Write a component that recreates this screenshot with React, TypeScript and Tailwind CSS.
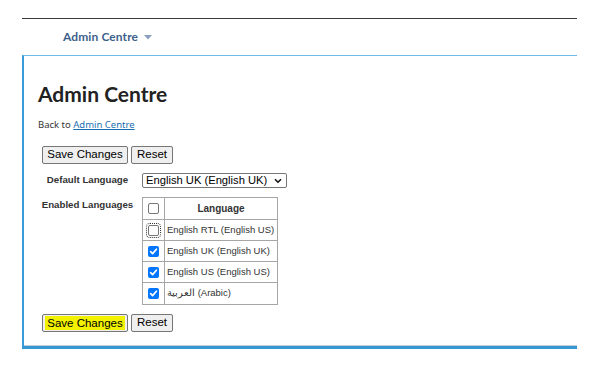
import React from "react";

function Box({ checked, focus }: { checked?: boolean; focus?: boolean }) {
  if (checked) {
    return (
      <span className="inline-flex w-[11px] h-[11px] rounded-[2px] bg-[#0075ff] items-center justify-center">
        <svg width="9" height="9" viewBox="0 0 9 9">
          <path d="M1.6 4.6 L3.6 6.6 L7.4 2.2" fill="none" stroke="white" strokeWidth="1.7" strokeLinecap="round" strokeLinejoin="round" />
        </svg>
      </span>
    );
  }
  return (
    <span className={"inline-block w-[11px] h-[11px] rounded-[2px] border border-[#767676] bg-white " + (focus ? "outline outline-1 outline-dotted outline-[#333] outline-offset-[1px]" : "")} />
  );
}

function Btn({ label, w, hl }: { label: string; w: string; hl?: boolean }) {
  return (
    <button
      className={
        "h-[18px] border border-[#767676] rounded-[2px] text-[11.5px] leading-none text-black font-['Liberation_Sans',sans-serif] flex items-center justify-center bg-[#efefef] " +
        w
      }
    >
      <span className={hl ? "bg-[#f2f200] px-[2px] leading-[14px]" : ""}>{label}</span>
    </button>
  );
}

const rows = [
  { name: "English RTL (English US)", checked: false, focus: true },
  { name: "English UK (English UK)", checked: true },
  { name: "English US (English US)", checked: true },
  { name: "العربية (Arabic)", checked: true },
];

export default function App() {
  return (
    <div className="w-[599px] h-[367px] bg-white overflow-hidden font-['Liberation_Sans',sans-serif]">
      <div className="pt-[18px] px-[22px]">
        <div className="h-[37px] border-t border-[#3a3a3a] flex items-center pl-[41px]">
          <span className="text-[12px] font-bold text-[#3d5f8c] font-['Lato',sans-serif] tracking-[0.1px]">Admin Centre</span>
          <svg className="ml-[6px] mt-[1px]" width="8" height="5" viewBox="0 0 8 5">
            <path d="M0 0 L8 0 L4 4.5 Z" fill="#8a9fbd" />
          </svg>
        </div>
        <div className="h-[294px] border-t border-t-[#6dbbe7] border-l-2 border-l-[#3b9bd8] border-b-[3px] border-b-[#3598d5]">
          <div className="h-full border-b border-b-[#c5ccd3] pl-[14px] pt-[26px]">
            <h1 className="text-[21px] leading-[24px] font-bold text-[#222] font-['Lato',sans-serif]">Admin Centre</h1>
            <div className="mt-[12px] text-[9.5px] leading-[13px] text-[#333] font-['Noto_Sans',sans-serif]">
              Back to <a className="text-[#1a6fb0] underline">Admin Centre</a>
            </div>
            <div className="mt-[15px] ml-[4px] flex gap-[3px]">
              <Btn label="Save Changes" w="w-[86px]" />
              <Btn label="Reset" w="w-[42px]" />
            </div>
            <div className="mt-[9px] flex items-center">
              <div className="w-[95px] ml-[2px] text-center text-[9.7px] font-bold text-[#333] whitespace-nowrap">Default Language</div>
              <div className="ml-[7px] relative w-[145px] h-[15px] border border-[#767676] rounded-[2px] bg-white flex items-center">
                <span className="pl-[3px] text-[11.2px] leading-none text-black">English UK (English UK)</span>
                <svg className="absolute right-[4px] top-[4px]" width="8" height="6" viewBox="0 0 8 6">
                  <path d="M1 1.2 L4 4.2 L7 1.2" fill="none" stroke="#111" strokeWidth="1.6" />
                </svg>
              </div>
            </div>
            <div className="mt-[9px] flex items-start">
              <div className="w-[95px] ml-[2px] pt-[1px] text-center text-[9.7px] font-bold text-[#333] whitespace-nowrap">Enabled Languages</div>
              <table className="ml-[7px] border-collapse border border-[#a6a6a6]">
                <thead>
                  <tr className="h-[22px]">
                    <th className="w-[22px] border border-[#a6a6a6] p-0 text-center align-middle">
                      <span className="flex justify-center"><Box /></span>
                    </th>
                    <th className="w-[113px] border border-[#a6a6a6] p-0 text-[10px] font-bold text-[#333] text-center">Language</th>
                  </tr>
                </thead>
                <tbody>
                  {rows.map((r, i) => (
                    <tr key={i} className={i === 3 ? "h-[22px]" : "h-[21px]"}>
                      <td className="border border-[#a6a6a6] p-0 align-middle">
                        <span className="flex justify-center"><Box checked={r.checked} focus={r.focus} /></span>
                      </td>
                      <td className="border border-[#a6a6a6] pl-[2px] pr-0 py-0 text-[9.5px] text-[#333] whitespace-nowrap">{r.name}</td>
                    </tr>
                  ))}
                </tbody>
              </table>
            </div>
            <div className="mt-[9px] ml-[4px] flex gap-[3px]">
              <Btn label="Save Changes" w="w-[86px]" hl />
              <Btn label="Reset" w="w-[42px]" />
            </div>
          </div>
        </div>
      </div>
    </div>
  );
}
